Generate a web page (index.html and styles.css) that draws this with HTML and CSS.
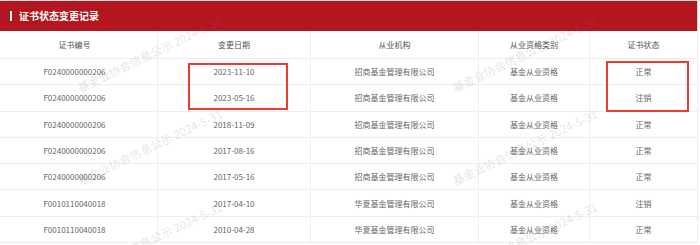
FILE: index.html
```html
<!DOCTYPE html>
<html lang="zh-CN">
<head>
<meta charset="utf-8">
<title>证书状态变更记录</title>
<link rel="stylesheet" href="styles.css">
</head>
<body>
<div class="page">
  <div class="title-bar"><span class="title-mark"></span><span class="title">证书状态变更记录</span></div>
  <div class="table">
    <div class="row head">
      <div class="cell c1">证书编号</div><div class="cell">变更日期</div><div class="cell">从业机构</div><div class="cell">从业资格类别</div><div class="cell">证书状态</div>
    </div>
    <div class="row"><div class="cell c1">F0240000000206</div><div class="cell">2023-11-10</div><div class="cell">招商基金管理有限公司</div><div class="cell">基金从业资格</div><div class="cell">正常</div></div>
    <div class="row"><div class="cell c1">F0240000000206</div><div class="cell">2023-05-16</div><div class="cell">招商基金管理有限公司</div><div class="cell">基金从业资格</div><div class="cell">注销</div></div>
    <div class="row"><div class="cell c1">F0240000000206</div><div class="cell">2018-11-09</div><div class="cell">招商基金管理有限公司</div><div class="cell">基金从业资格</div><div class="cell">正常</div></div>
    <div class="row"><div class="cell c1">F0240000000206</div><div class="cell">2017-08-16</div><div class="cell">招商基金管理有限公司</div><div class="cell">基金从业资格</div><div class="cell">正常</div></div>
    <div class="row"><div class="cell c1">F0240000000206</div><div class="cell">2017-05-16</div><div class="cell">招商基金管理有限公司</div><div class="cell">基金从业资格</div><div class="cell">正常</div></div>
    <div class="row"><div class="cell c1">F0010110040018</div><div class="cell">2017-04-10</div><div class="cell">华夏基金管理有限公司</div><div class="cell">基金从业资格</div><div class="cell">注销</div></div>
    <div class="row"><div class="cell c1">F0010110040018</div><div class="cell">2010-04-28</div><div class="cell">华夏基金管理有限公司</div><div class="cell">基金从业资格</div><div class="cell">正常</div></div>
  </div>

  <div class="mark-box box-date"></div>
  <div class="mark-box box-status"></div>

  <div class="wm wm-a1">基金业协会信息公示 2024-5-31</div>
  <div class="wm wm-a2">基金业协会信息公示 2024-5-31</div>
  <div class="wm wm-a3">基金业协会信息公示 2024-5-31</div>
  <div class="wm wm-a4">基金业协会信息公示 2024-5-31</div>
  <div class="wm wm-b1">基金业协会信息公示 2024-5-31</div>
  <div class="wm wm-b2">基金业协会信息公示 2024-5-31</div>
  <div class="wm wm-b3">基金业协会信息公示 2024-5-31</div>
  <div class="wm wm-b4">基金业协会信息公示 2024-5-31</div>
</div>
</body>
</html>
```
FILE: styles.css
```css
html, body {
  margin: 0;
  padding: 0;
  background: #ffffff;
}
.page {
  position: relative;
  width: 700px;
  height: 245px;
  overflow: hidden;
  font-family: "Noto Sans CJK SC", "Noto Sans", sans-serif;
  border-top: 1px solid #eadede;
  box-sizing: border-box;
}
.title-bar {
  width: 698px;
  height: 30px;
  background: #b3161f;
  border-right: 1px solid #e9c9c9;
  display: flex;
  align-items: center;
  padding-left: 10px;
  box-sizing: border-box;
}
.title-mark {
  width: 2px;
  height: 10px;
  background: #ffffff;
  margin-right: 7px;
}
.title {
  color: #ffffff;
  font-size: 10px;
  font-weight: bold;
  line-height: 1;
}
.table {
  width: 699px;
}
.row {
  display: grid;
  grid-template-columns: 158px 153px 168px 111px 108px;
  height: 26.3px;
  border-bottom: 1px solid #eeeeee;
  box-sizing: border-box;
}
.row.head {
  height: 28px;
}
.cell {
  display: flex;
  align-items: center;
  justify-content: center;
  border-right: 1px solid #efefef;
  font-size: 8px;
  color: #666666;
  white-space: nowrap;
}
.head .cell {
  color: #555555;
}
.cell.c1 {
  padding-right: 8px;
}
.mark-box {
  position: absolute;
  border: 2px solid #ee3b2c;
  box-sizing: border-box;
}
.box-date {
  left: 188px;
  top: 62px;
  width: 100px;
  height: 47px;
}
.box-status {
  left: 606px;
  top: 60px;
  width: 83px;
  height: 51px;
}
.wm {
  position: absolute;
  font-size: 11.5px;
  line-height: 14px;
  height: 14px;
  white-space: nowrap;
  color: rgba(120, 120, 120, 0.2);
  transform-origin: 0 50%;
  transform: rotate(-25.5deg);
  pointer-events: none;
}
.wm-a1 { left: 78px; top: -13px; }
.wm-a2 { left: 78px; top: 80px; }
.wm-a3 { left: 78px; top: 173px; }
.wm-a4 { left: 78px; top: 266px; }
.wm-b1 { left: 453px; top: -13px; }
.wm-b2 { left: 453px; top: 80px; }
.wm-b3 { left: 453px; top: 173px; }
.wm-b4 { left: 453px; top: 266px; }
```
